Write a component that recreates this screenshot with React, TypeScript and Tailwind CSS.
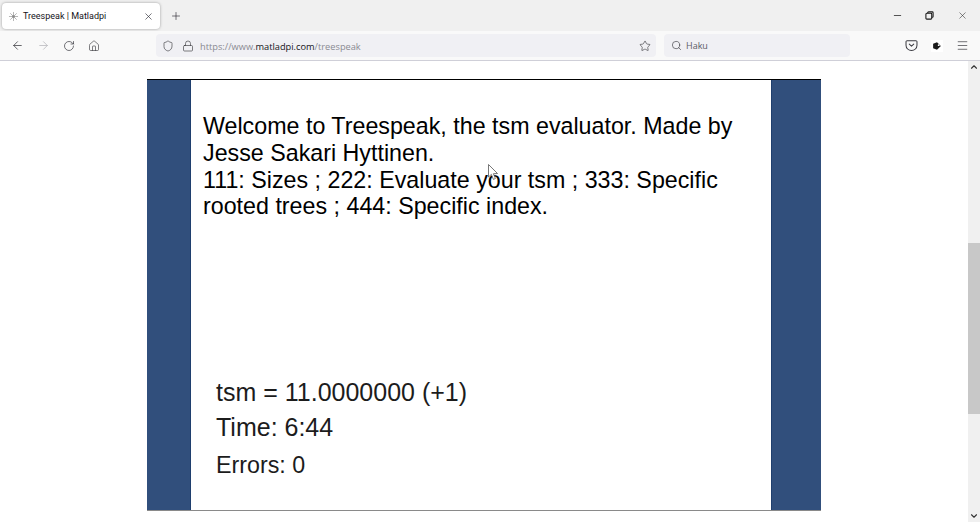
import { ArrowLeft, ArrowRight, RotateCw, Home, Shield, Lock, Star, Search, Menu, X, Plus, Minus, ChevronUp, ChevronDown } from "lucide-react";

function Pocket() {
  return (
    <svg width="13" height="13" viewBox="0 0 14 14" fill="none" stroke="#3a3a40" strokeWidth="1.1" strokeLinecap="round" strokeLinejoin="round">
      <path d="M2.3 1.8h9.4a1.2 1.2 0 0 1 1.2 1.2v3.6a5.9 5.9 0 0 1-11.8 0V3a1.2 1.2 0 0 1 1.2-1.2z" />
      <path d="M4.6 5.5 7 7.8l2.4-2.3" />
    </svg>
  );
}

function Extension() {
  return (
    <svg width="12" height="12" viewBox="0 0 14 14" className="bg-white">
      <path d="M7 2.5 L11.5 7 L7 11.5 L2.5 9.5 L2.5 4.5 Z" fill="#1a1a1a" />
      <circle cx="9" cy="6" r="1.1" fill="#fff" />
    </svg>
  );
}

function Favicon() {
  return (
    <svg width="11" height="11" viewBox="0 0 12 12" stroke="#a8a8a8" strokeWidth="0.9" strokeLinecap="round">
      <path d="M6 1.5v9M1.5 6h9M2.8 2.8l6.4 6.4M9.2 2.8 2.8 9.2" />
      <circle cx="6" cy="6" r="1.4" fill="#888" stroke="none" />
    </svg>
  );
}

function Restore() {
  return (
    <svg width="9" height="9" viewBox="0 0 10 10" fill="none" stroke="#1a1a1a" strokeWidth="1.2">
      <rect x="1" y="2.5" width="6.5" height="6.5" rx="1" fill="#f0f0f0" />
      <path d="M3 2.5V2a1 1 0 0 1 1-1h4a1 1 0 0 1 1 1v4a1 1 0 0 1-1 1h-.5" />
    </svg>
  );
}

function Cursor() {
  return (
    <svg width="11" height="17" viewBox="0 0 11 17" className="absolute left-[488px] top-[103px]">
      <path d="M0.5 0.5 L0.5 13 L3.4 10.4 L5.4 15.4 L7.4 14.5 L5.4 9.7 L9.5 9.5 Z" fill="#fff" stroke="#555" strokeWidth="0.8" strokeLinejoin="round" />
    </svg>
  );
}

export default function App() {
  return (
    <div className="w-[980px] h-[522px] overflow-hidden flex flex-col bg-white font-['Liberation_Sans',sans-serif]">
      <div className="h-[31px] bg-[#f0f0f0] flex items-start font-['Open_Sans',sans-serif] shrink-0">
        <div className="mt-[3px] ml-[2px] w-[158px] h-[26px] bg-white rounded-[4px] shadow-[0_0_3px_rgba(0,0,0,0.35)] flex items-center pl-[6px] pr-[6px]">
          <Favicon />
          <span className="ml-[4px] mt-[1px] text-[9px] text-[#15141a] flex-1 whitespace-nowrap font-['Roboto',sans-serif]">Treespeak | Matladpi</span>
          <X size={11} strokeWidth={1.4} color="#2b2a33" />
        </div>
        <div className="mt-[10px] ml-[10px]">
          <Plus size={12} strokeWidth={1.3} color="#2b2a33" />
        </div>
        <div className="ml-auto flex items-center h-[31px] pr-[12px]">
          <Minus size={11} strokeWidth={1.6} color="#1a1a1a" />
          <div className="ml-[22px]"><Restore /></div>
          <div className="ml-[23px]"><X size={11} strokeWidth={1.1} color="#1a1a1a" /></div>
        </div>
      </div>

      <div className="h-[30px] bg-[#f9f9f9] border-b border-[#cfcfd8] flex items-center font-['Open_Sans',sans-serif] shrink-0">
        <div className="flex items-center gap-[13px] ml-[11px] w-[145px]">
          <ArrowLeft size={13} strokeWidth={1.4} color="#3a3a40" />
          <ArrowRight size={13} strokeWidth={1.4} color="#b5b5ba" />
          <RotateCw size={12} strokeWidth={1.4} color="#3a3a40" />
          <Home size={12} strokeWidth={1.3} color="#3a3a40" />
        </div>
        <div className="w-[500px] h-[23px] bg-[#f0f0f4] rounded-[4px] flex items-center pl-[6px] pr-[5px]">
          <Shield size={12} strokeWidth={1.3} color="#3a3a40" />
          <Lock size={12} strokeWidth={1.3} color="#3a3a40" className="ml-[8px]" />
          <span className="ml-[6px] mt-[2px] text-[9.25px] text-[#8a8a92] whitespace-nowrap">
            https://www.<span className="text-[#15141a]">matladpi.com</span>/treespeak
          </span>
          <Star size={12} strokeWidth={1.3} color="#3a3a40" className="ml-auto" />
        </div>
        <div className="ml-[8px] w-[186px] h-[23px] bg-[#f0f0f4] rounded-[4px] flex items-center pl-[7px]">
          <Search size={11} strokeWidth={1.4} color="#3a3a40" />
          <span className="ml-[4px] mt-[1px] text-[9px] text-[#5b5b66]">Haku</span>
        </div>
        <div className="flex items-center ml-[55px] gap-[13px]">
          <Pocket />
          <Extension />
          <Menu size={13} strokeWidth={1.3} color="#3a3a40" />
        </div>
      </div>

      <div className="flex-1 flex relative min-h-0">
        <div className="flex-1 pt-[18px] pl-[147px]">
          <div className="w-[674px] h-[432px] flex border-b border-[#8a8a8a] border-t border-t-black">
            <div className="w-[44px] bg-[#314f7c] border-r border-[#1f3f6e]" />
            <div className="w-[580px] bg-white flex flex-col text-black">
              <div className="pl-[12px] pr-[20px] pt-[33px] text-[23.25px] leading-[26.75px]">
                <p>Welcome to Treespeak, the tsm evaluator. Made by Jesse Sakari Hyttinen.</p>
                <p>111: Sizes ; 222: Evaluate your tsm ; 333: Specific rooted trees ; 444: Specific index.</p>
              </div>
              <div className="mt-auto pl-[25px] pb-[31px] text-[#1c1c1c]">
                <p className="text-[25px] leading-[28px] mb-[7px]">tsm = 11.0000000 (+1)</p>
                <p className="text-[25px] leading-[28px] mb-[10px]">Time: 6:44</p>
                <p className="text-[23.25px] leading-[28px]">Errors: 0</p>
              </div>
            </div>
            <div className="w-[50px] bg-[#314f7c] border-l border-[#1f3f6e]" />
          </div>
        </div>
        <div className="w-[12px] bg-[#f0f0f0] flex flex-col items-center shrink-0">
          <div className="h-[12px] flex items-center"><ChevronUp size={10} strokeWidth={2.6} color="#333" /></div>
          <div className="mt-[170px] w-full h-[171px] bg-[#c8c8c8]" />
          <div className="mt-auto h-[12px] flex items-center"><ChevronDown size={10} strokeWidth={2.6} color="#333" /></div>
        </div>
        <Cursor />
      </div>
    </div>
  );
}
